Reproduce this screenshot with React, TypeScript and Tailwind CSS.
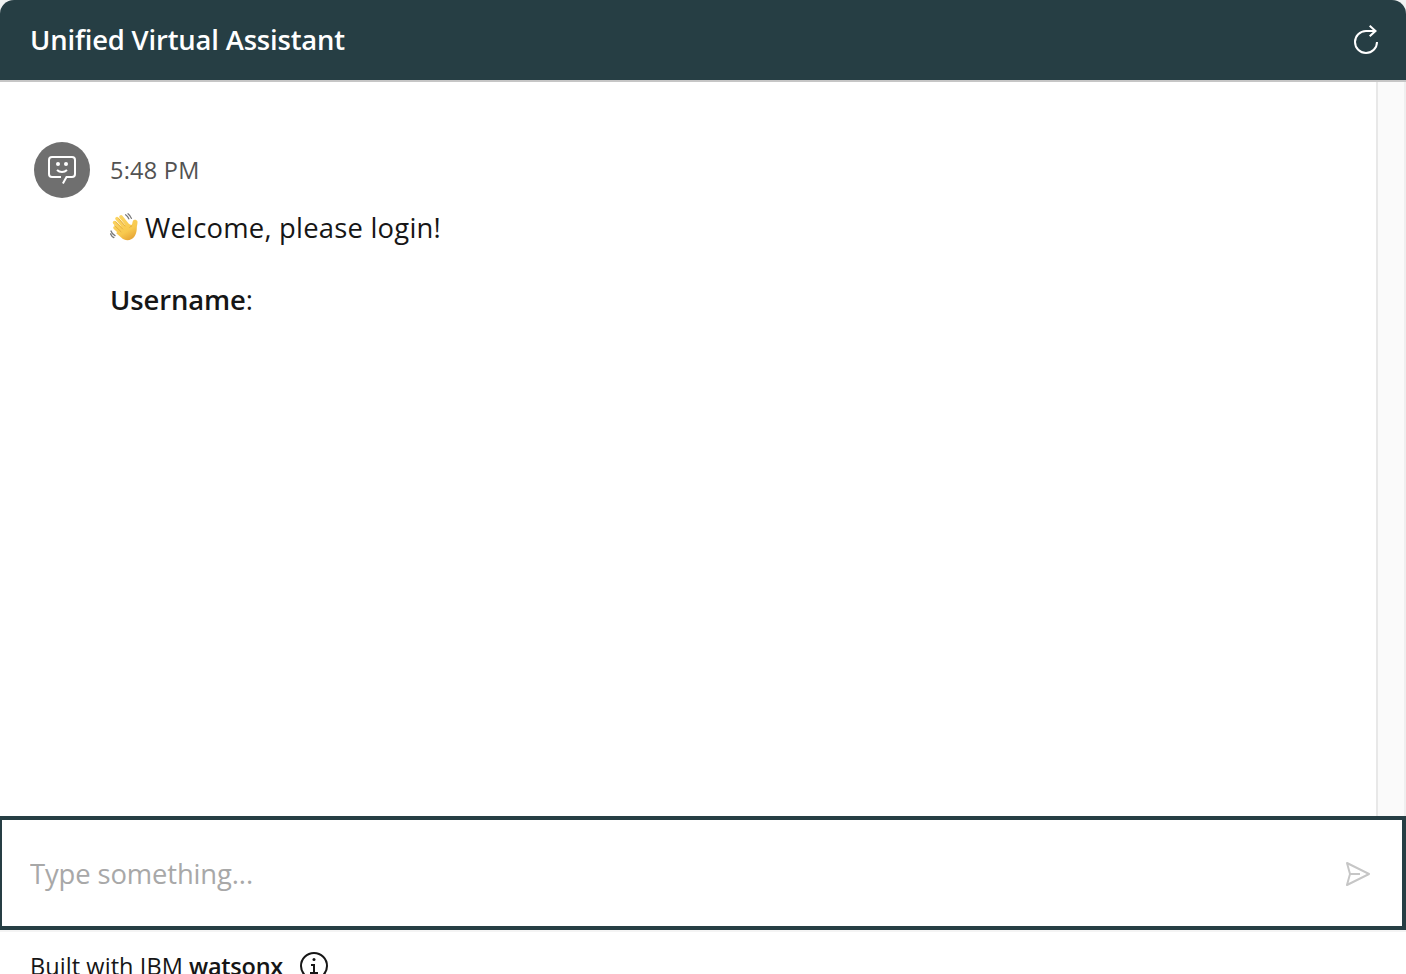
import { useState } from 'react';

function Restart() {
  return (
    <svg width="32" height="32" viewBox="0 0 32 32" fill="none" stroke="#fff" strokeWidth="2">
      <path d="M26 7H16A11 11 0 1 0 27 18" />
      <path d="M19.7 1.7 25.5 7l-5.8 5.3" />
    </svg>
  );
}

function AssistantFace() {
  return (
    <svg width="32" height="32" viewBox="0 0 32 32" fill="none" stroke="#fff" strokeWidth="2">
      <path d="M15 23H6a3 3 0 0 1-3-3V6a3 3 0 0 1 3-3h20a3 3 0 0 1 3 3v14a3 3 0 0 1-3 3h-5.5l-3.6 6.5" />
      <path d="M11 16c2.8 2.6 7.2 2.6 10 0" />
      <circle cx="12" cy="10" r="2" fill="#fff" stroke="none" />
      <circle cx="20" cy="10" r="2" fill="#fff" stroke="none" />
    </svg>
  );
}

function Wave() {
  return (
    <svg width="28" height="28" viewBox="0 0 28 28" fill="none" strokeLinecap="round" className="relative -top-px shrink-0">
      <defs>
        <linearGradient id="skin" x1="6" y1="3" x2="20" y2="28" gradientUnits="userSpaceOnUse">
          <stop stopColor="#fbd665" />
          <stop offset="0.65" stopColor="#f8c94e" />
          <stop offset="1" stopColor="#e5a233" />
        </linearGradient>
      </defs>
      <g stroke="url(#skin)" strokeWidth="3.6">
        <path d="m11 3.8 8 10M7 5.6l9.5 11M4.6 9.6l9.3 9M5 14.8l7.5 7" />
      </g>
      <path d="M12 12.5 18.5 11l3 1c1.2-1.4.7-3 1.6-4.5.9-1.3 4-.8 4.3.8.4 2.2-.6 4.3-.6 6.4 0 5.1-1.8 9.6-5.6 11.6-3.5 1.8-7.3.8-10-1.8l-5-4.3Z" fill="url(#skin)" />
      <path d="m8.8 5.7 6.2 7.3M5.7 8.8l6.9 7.2M4.6 12.6l6.4 6.1M19.8 14.2c.6-.6 1.2-1 1.9-1.2" stroke="#dda03a" strokeWidth=".7" />
      <path d="M18 .8c1.6 1.2 2.7 2.7 3.4 4.6M15.6 1.8c1.5 1 2.6 2.3 3.2 4M1 18c.6 2 2 3.6 4 4.6M.5 20.8c.6 1.7 1.9 3.1 3.4 3.8" stroke="#777" strokeWidth="1.3" />
    </svg>
  );
}

export default function App() {
  const [text, setText] = useState('');
  return (
    <div className="flex h-[974px] w-[1406px] flex-col overflow-hidden bg-white font-['Open_Sans','Noto_Sans',sans-serif] text-[27.4px] text-[#161616]">
      <div className="shrink-0 bg-[#f0f2f2]">
        <header className="flex h-[82px] items-center justify-between rounded-t-[14px] border-b-2 border-[#c6c6c6] bg-[#263e44] pr-6 pl-[30px] text-white">
          <h1 className="text-[27.4px] leading-9 font-semibold tracking-[-0.16px] whitespace-nowrap">Unified Virtual Assistant</h1>
          <Restart />
        </header>
      </div>
      <div className="flex min-h-0 flex-1">
        <main className="flex flex-1 items-start gap-5 pt-[60px] pl-[34px]">
          <div className="flex size-14 shrink-0 items-center justify-center rounded-full bg-[#6f6f6f]">
            <AssistantFace />
          </div>
          <div>
            <div className="flex h-14 items-center pt-0.5 text-[23.5px] tracking-[0.25px] text-[#525252]">
              <span>5:48 PM</span>
            </div>
            <div className="mt-3 flex h-9 items-center gap-[7px] whitespace-nowrap">
              <Wave />
              <span className="tracking-[0.22px]">Welcome, please login!</span>
            </div>
            <p className="mt-9 leading-9"><strong className="font-semibold tracking-[-0.1px]">Username</strong>:</p>
          </div>
        </main>
        <div className="w-[30px] border-r-2 border-l-2 border-r-[#efefef] border-l-[#e8e8e8] bg-[#fafafa]" />
      </div>
      <form onSubmit={(e) => e.preventDefault()} className="flex h-[114px] shrink-0 items-center border-y-4 border-r-4 border-l-2 border-[#263e44] pt-px pr-7 pl-7">
        <input value={text} onChange={(e) => setText(e.target.value)} placeholder="Type something..." className="h-10 min-w-0 flex-1 tracking-[-0.12px] outline-none placeholder:text-[#a8a8a8]" />
        <button aria-label="Send">
          <svg width="32" height="32" viewBox="0 0 32 32" fill="#c6c6c6">
            <path d="M27.45 15.11l-22-11a1 1 0 0 0-1.08.12 1 1 0 0 0-.33 1L7 16 4 26.74A1 1 0 0 0 5 28a1 1 0 0 0 .45-.11l22-11a1 1 0 0 0 0-1.78Zm-20.9 10L8.76 17H18v-2H8.76L6.55 6.89 24.76 16Z" />
          </svg>
        </button>
      </form>
      <footer className="flex h-11 shrink-0 items-start overflow-hidden border-t-2 border-[#f4f4f4] pt-[18px] pl-[30px] text-[23.5px]">
        <p className="w-[268px] leading-8 tracking-[0.07px] whitespace-nowrap">Built with IBM <strong className="font-semibold tracking-[-0.25px]">watsonx</strong></p>
        <svg width="32" height="32" viewBox="0 0 32 32" fill="#161616">
          <circle cx="16" cy="16" r="13" fill="none" stroke="#161616" strokeWidth="2" />
          <path d="M17 22v-8h-4v2h2v6h-3v2h8v-2Z" />
          <circle cx="16" cy="9.5" r="1.5" />
        </svg>
      </footer>
    </div>
  );
}
